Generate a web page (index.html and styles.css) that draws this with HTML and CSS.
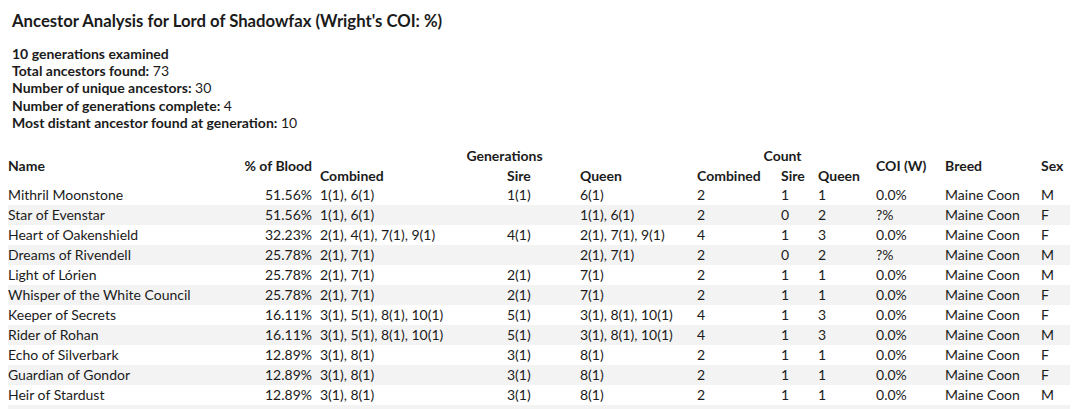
FILE: index.html
```html
<!DOCTYPE html>
<html>
<head>
<meta charset="utf-8">
<link rel="stylesheet" href="styles.css">
</head>
<body>
<h1 class="title">Ancestor Analysis for Lord of Shadowfax (Wright's COI: %)</h1>
<div class="summary">
  <div><b>10 generations examined</b></div>
  <div><b>Total ancestors found:</b> 73</div>
  <div><b>Number of unique ancestors:</b> 30</div>
  <div><b>Number of generations complete:</b> 4</div>
  <div><b>Most distant ancestor found at generation:</b> 10</div>
</div>
<table class="anc">
  <colgroup>
    <col class="c-name"><col class="c-blood"><col class="c-gcomb"><col class="c-gsire"><col class="c-gqueen">
    <col class="c-ccomb"><col class="c-csire"><col class="c-cqueen"><col class="c-coi"><col class="c-breed"><col class="c-sex">
  </colgroup>
  <thead>
    <tr class="h1">
      <th rowspan="2" class="name">Name</th>
      <th rowspan="2" class="blood">% of Blood</th>
      <th colspan="3" class="group">Generations</th>
      <th colspan="3" class="group">Count</th>
      <th rowspan="2">COI (W)</th>
      <th rowspan="2">Breed</th>
      <th rowspan="2">Sex</th>
    </tr>
    <tr class="h2">
      <th>Combined</th><th>Sire</th><th>Queen</th>
      <th>Combined</th><th>Sire</th><th>Queen</th>
    </tr>
  </thead>
  <tbody>
    <tr><td class="name">Mithril Moonstone</td><td class="blood">51.56%</td><td>1(1), 6(1)</td><td>1(1)</td><td>6(1)</td><td>2</td><td>1</td><td>1</td><td>0.0%</td><td>Maine Coon</td><td>M</td></tr>
    <tr><td class="name">Star of Evenstar</td><td class="blood">51.56%</td><td>1(1), 6(1)</td><td></td><td>1(1), 6(1)</td><td>2</td><td>0</td><td>2</td><td>?%</td><td>Maine Coon</td><td>F</td></tr>
    <tr><td class="name">Heart of Oakenshield</td><td class="blood">32.23%</td><td>2(1), 4(1), 7(1), 9(1)</td><td>4(1)</td><td>2(1), 7(1), 9(1)</td><td>4</td><td>1</td><td>3</td><td>0.0%</td><td>Maine Coon</td><td>F</td></tr>
    <tr><td class="name">Dreams of Rivendell</td><td class="blood">25.78%</td><td>2(1), 7(1)</td><td></td><td>2(1), 7(1)</td><td>2</td><td>0</td><td>2</td><td>?%</td><td>Maine Coon</td><td>M</td></tr>
    <tr><td class="name">Light of Lórien</td><td class="blood">25.78%</td><td>2(1), 7(1)</td><td>2(1)</td><td>7(1)</td><td>2</td><td>1</td><td>1</td><td>0.0%</td><td>Maine Coon</td><td>M</td></tr>
    <tr><td class="name">Whisper of the White Council</td><td class="blood">25.78%</td><td>2(1), 7(1)</td><td>2(1)</td><td>7(1)</td><td>2</td><td>1</td><td>1</td><td>0.0%</td><td>Maine Coon</td><td>F</td></tr>
    <tr><td class="name">Keeper of Secrets</td><td class="blood">16.11%</td><td>3(1), 5(1), 8(1), 10(1)</td><td>5(1)</td><td>3(1), 8(1), 10(1)</td><td>4</td><td>1</td><td>3</td><td>0.0%</td><td>Maine Coon</td><td>F</td></tr>
    <tr><td class="name">Rider of Rohan</td><td class="blood">16.11%</td><td>3(1), 5(1), 8(1), 10(1)</td><td>5(1)</td><td>3(1), 8(1), 10(1)</td><td>4</td><td>1</td><td>3</td><td>0.0%</td><td>Maine Coon</td><td>M</td></tr>
    <tr><td class="name">Echo of Silverbark</td><td class="blood">12.89%</td><td>3(1), 8(1)</td><td>3(1)</td><td>8(1)</td><td>2</td><td>1</td><td>1</td><td>0.0%</td><td>Maine Coon</td><td>F</td></tr>
    <tr><td class="name">Guardian of Gondor</td><td class="blood">12.89%</td><td>3(1), 8(1)</td><td>3(1)</td><td>8(1)</td><td>2</td><td>1</td><td>1</td><td>0.0%</td><td>Maine Coon</td><td>F</td></tr>
    <tr><td class="name">Heir of Stardust</td><td class="blood">12.89%</td><td>3(1), 8(1)</td><td>3(1)</td><td>8(1)</td><td>2</td><td>1</td><td>1</td><td>0.0%</td><td>Maine Coon</td><td>M</td></tr>
    <tr class="spill"><td class="name"></td><td class="blood"></td><td></td><td></td><td></td><td></td><td></td><td></td><td></td><td></td><td></td></tr>
  </tbody>
</table>
</body>
</html>
```

FILE: styles.css
```css
html, body {
  background: #ffffff;
}
body {
  margin: 8px;
  font-family: Lato, "Noto Sans", sans-serif;
  color: #1b1b1b;
}
.title {
  margin: 3px 0 0 0;
  padding-left: 4px;
  font-size: 16.7px;
  line-height: 20px;
  font-weight: 700;
}
.summary {
  margin-top: 14px;
  padding-left: 4px;
  font-size: 14px;
  line-height: 17.2px;
}
.summary b {
  font-weight: 700;
}
.anc {
  margin-top: 15px;
  width: 1062px;
  table-layout: fixed;
  border-collapse: collapse;
  font-size: 14px;
}
.c-name { width: 208px; }
.c-blood { width: 100px; }
.c-gcomb { width: 187px; }
.c-gsire { width: 73px; }
.c-gqueen { width: 117px; }
.c-ccomb { width: 84px; }
.c-csire { width: 37px; }
.c-cqueen { width: 58px; }
.c-coi { width: 69px; }
.c-breed { width: 96px; }
.c-sex { width: 33px; }
.anc th, .anc td {
  padding: 0 4px;
  text-align: left;
  white-space: nowrap;
  overflow: hidden;
}
.anc th {
  font-weight: 700;
  vertical-align: middle;
  line-height: 17px;
}
.anc .h1 {
  height: 19px;
}
.anc .h2 {
  height: 20px;
}
.anc th.group {
  text-align: center;
}
.anc .name {
  padding-left: 0;
}
.anc .blood {
  text-align: right;
}
.anc tbody tr {
  height: 20px;
}
.anc tbody td {
  line-height: 20px;
}
.anc tbody tr:nth-child(even) {
  background: #f3f3f3;
}
```
